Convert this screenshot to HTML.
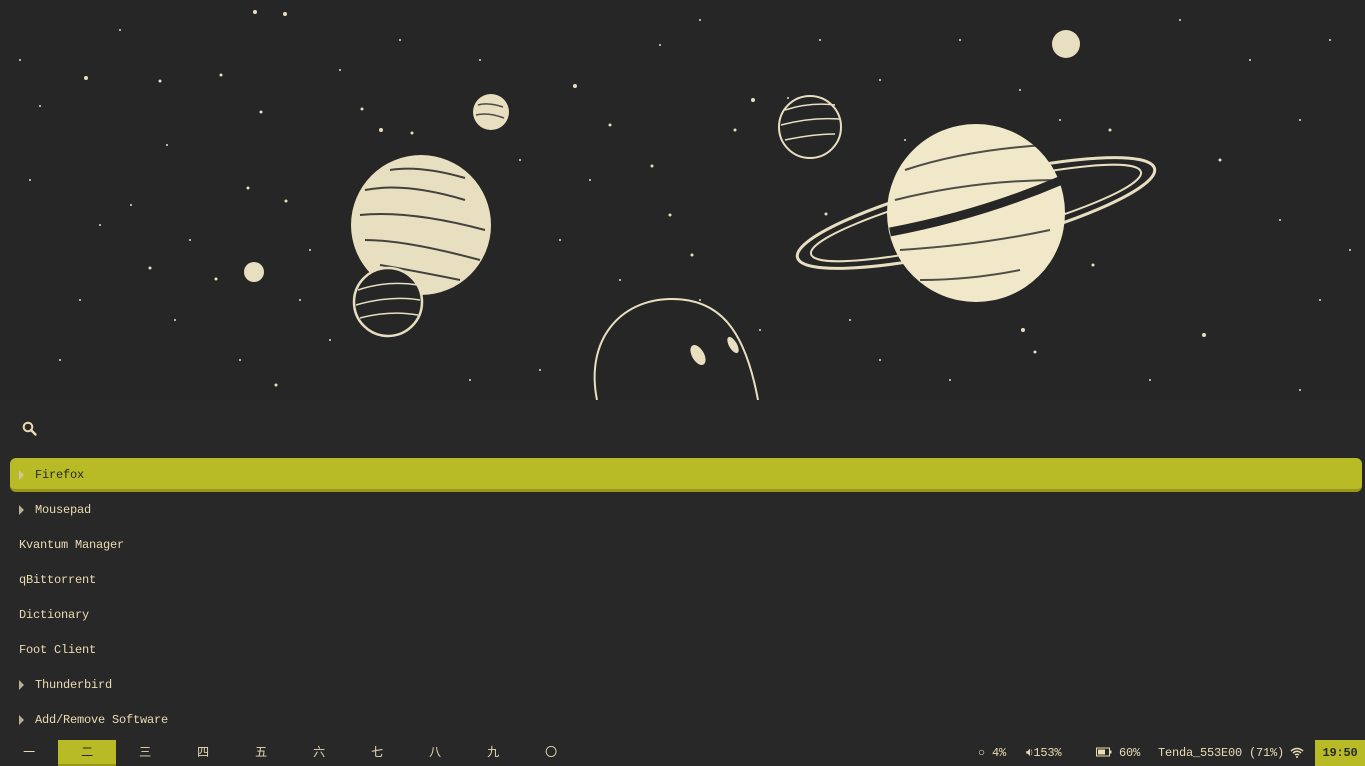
<!DOCTYPE html>
<html><head><meta charset="utf-8"><style>
html,body{margin:0;padding:0;width:1365px;height:766px;background:#282828;overflow:hidden;font-family:"Liberation Mono","Noto Sans CJK SC",monospace;color:#ebdbb2;font-size:12px}
svg.wp{position:absolute;left:0;top:0}
.row{position:absolute;left:10px;width:1352px;height:34px;line-height:35px;box-sizing:border-box;letter-spacing:-0.2px}
.row.sel{background:#b8bb26;border-radius:6px;border-bottom:3px solid #98971a;color:#282828;line-height:35px}
.tri{position:absolute;left:9px;top:12px;width:0;height:0;border-top:5px solid transparent;border-bottom:5px solid transparent;border-left:5px solid #bdae93}
.sel .tri{border-left-color:#d5c4a1}
.t1{position:absolute;left:25px}
.t0{position:absolute;left:9px}
.bar{position:absolute;left:0;top:740px;width:1365px;height:26px;line-height:26px;letter-spacing:-0.2px}
.ws{position:absolute;top:0;width:58px;text-align:center;font-size:12px}
.ws.a{background:#b8bb26;color:#282828;border-bottom:2px solid #98971a;height:24px}
.st{position:absolute;top:0}
</style></head><body>
<svg class="wp" width="1365" height="400" viewBox="0 0 1365 400">
<rect width="1365" height="400" fill="#262626"/>
<g fill="#e8dfc0">
<circle cx="255" cy="12" r="2"/><circle cx="285" cy="14" r="2"/><circle cx="86" cy="78" r="2"/><circle cx="160" cy="81" r="1.5"/><circle cx="221" cy="75" r="1.5"/><circle cx="575" cy="86" r="2"/><circle cx="362" cy="109" r="1.5"/><circle cx="381" cy="130" r="2"/><circle cx="412" cy="133" r="1.5"/><circle cx="261" cy="112" r="1.5"/><circle cx="248" cy="188" r="1.5"/><circle cx="286" cy="201" r="1.5"/><circle cx="167" cy="145" r="1"/><circle cx="40" cy="106" r="1"/><circle cx="20" cy="60" r="1"/><circle cx="131" cy="205" r="1"/><circle cx="100" cy="225" r="1"/><circle cx="190" cy="240" r="1"/><circle cx="216" cy="279" r="1.5"/><circle cx="150" cy="268" r="1.5"/><circle cx="80" cy="300" r="1"/><circle cx="175" cy="320" r="1"/><circle cx="240" cy="360" r="1"/><circle cx="276" cy="385" r="1.5"/><circle cx="60" cy="360" r="1"/><circle cx="330" cy="340" r="1"/><circle cx="540" cy="370" r="1"/><circle cx="470" cy="380" r="1"/><circle cx="610" cy="125" r="1.5"/><circle cx="652" cy="166" r="1.5"/><circle cx="670" cy="215" r="1.5"/><circle cx="692" cy="255" r="1.5"/><circle cx="735" cy="130" r="1.5"/><circle cx="753" cy="100" r="2"/><circle cx="788" cy="98" r="1"/><circle cx="826" cy="214" r="1.5"/><circle cx="660" cy="45" r="1"/><circle cx="700" cy="20" r="1"/><circle cx="820" cy="40" r="1"/><circle cx="880" cy="80" r="1"/><circle cx="905" cy="140" r="1"/><circle cx="850" cy="320" r="1"/><circle cx="1023" cy="330" r="2"/><circle cx="1035" cy="352" r="1.5"/><circle cx="1093" cy="265" r="1.5"/><circle cx="1204" cy="335" r="2"/><circle cx="1110" cy="130" r="1.5"/><circle cx="1220" cy="160" r="1.5"/><circle cx="1300" cy="120" r="1"/><circle cx="1330" cy="40" r="1"/><circle cx="1250" cy="60" r="1"/><circle cx="1180" cy="20" r="1"/><circle cx="960" cy="40" r="1"/><circle cx="1020" cy="90" r="1"/><circle cx="1280" cy="220" r="1"/><circle cx="1320" cy="300" r="1"/><circle cx="1150" cy="380" r="1"/><circle cx="1300" cy="390" r="1"/><circle cx="950" cy="380" r="1"/><circle cx="880" cy="360" r="1"/><circle cx="620" cy="280" r="1"/><circle cx="560" cy="240" r="1"/><circle cx="590" cy="180" r="1"/><circle cx="700" cy="300" r="1"/><circle cx="760" cy="330" r="1"/><circle cx="520" cy="160" r="1"/><circle cx="480" cy="60" r="1"/><circle cx="400" cy="40" r="1"/><circle cx="340" cy="70" r="1"/><circle cx="310" cy="250" r="1"/><circle cx="300" cy="300" r="1"/><circle cx="120" cy="30" r="1"/><circle cx="30" cy="180" r="1"/><circle cx="1060" cy="120" r="1"/><circle cx="1350" cy="250" r="1"/>
<circle cx="1066" cy="44" r="14"/><circle cx="254" cy="272" r="10"/>
<circle cx="491" cy="112" r="18"/>
<circle cx="421" cy="225" r="70"/>
</g>
<g stroke="#262626" stroke-width="1.5" fill="none" opacity=".8"><path d="M478 105 q10 -3 25 2 M476 115 q12 -3 28 3"/></g>
<g stroke="#262626" stroke-width="2" fill="none" opacity=".85">
<path d="M365 190 q40 -8 100 10 M360 215 q50 -5 125 15 M365 240 q40 0 115 20 M380 265 q30 5 80 15 M390 170 q30 -5 75 8"/>
</g>
<circle cx="388" cy="302" r="34" fill="#262626" stroke="#e8dfc0" stroke-width="2.5"/>
<g stroke="#e8dfc0" stroke-width="1.5" fill="none"><path d="M358 290 q30 -10 60 -5 M356 305 q35 -10 64 -5 M360 318 q30 -8 58 -3"/></g>
<circle cx="810" cy="127" r="31" fill="#262626" stroke="#e8dfc0" stroke-width="2"/>
<g stroke="#e8dfc0" stroke-width="1.5" fill="none"><path d="M785 110 q25 -8 50 -5 M781 125 q30 -8 58 -6 M785 140 q28 -6 50 -6"/></g>
<g transform="rotate(-14 976 213)">
<ellipse cx="976" cy="213" rx="184" ry="34" fill="none" stroke="#e8dfc0" stroke-width="3"/>
<ellipse cx="976" cy="213" rx="170" ry="26" fill="none" stroke="#e8dfc0" stroke-width="2"/>
</g>
<circle cx="976" cy="213" r="89" fill="#f0e8c8"/>
<g stroke="#262626" stroke-width="2" fill="none" opacity=".8"><path d="M905 170 q60 -20 140 -25 M895 200 q80 -20 165 -20 M900 250 q80 -5 150 -20 M920 280 q50 0 100 -10"/></g>
<path d="M890 232 Q980 215 1062 180" stroke="#262626" stroke-width="9" fill="none"/>
<path d="M597 400 C585 340 620 300 670 299 C720 298 745 330 758 400" fill="none" stroke="#e8dfc0" stroke-width="2"/>
<ellipse cx="698" cy="355" rx="6" ry="11" transform="rotate(-30 698 355)" fill="#e8dfc0"/>
<ellipse cx="733" cy="345" rx="4" ry="9" transform="rotate(-30 733 345)" fill="#e8dfc0"/>
</svg>
<svg style="position:absolute;left:22px;top:421px" width="16" height="16" viewBox="0 0 16 16"><circle cx="6" cy="6" r="4.3" fill="none" stroke="#ebdbb2" stroke-width="2"/><path d="M9 9 L13.5 13.5" stroke="#ebdbb2" stroke-width="2.4" stroke-linecap="round"/></svg>
<div class="row sel" style="top:458px"><span class="tri"></span><span class="t1">Firefox</span></div>
<div class="row" style="top:493px"><span class="tri"></span><span class="t1">Mousepad</span></div>
<div class="row" style="top:528px"><span class="t0">Kvantum Manager</span></div>
<div class="row" style="top:563px"><span class="t0">qBittorrent</span></div>
<div class="row" style="top:598px"><span class="t0">Dictionary</span></div>
<div class="row" style="top:633px"><span class="t0">Foot Client</span></div>
<div class="row" style="top:668px"><span class="tri"></span><span class="t1">Thunderbird</span></div>
<div class="row" style="top:703px"><span class="tri"></span><span class="t1">Add/Remove Software</span></div>
<div class="bar">
<div class="ws" style="left:0">一</div><div class="ws a" style="left:58px">二</div><div class="ws" style="left:116px">三</div><div class="ws" style="left:174px">四</div><div class="ws" style="left:232px">五</div><div class="ws" style="left:290px">六</div><div class="ws" style="left:348px">七</div><div class="ws" style="left:406px">八</div><div class="ws" style="left:464px">九</div><div class="ws" style="left:522px">〇</div>
<span class="st" style="left:978px">○ 4%</span>
<span class="st" style="left:1026px">🔉︎153%</span>
<span class="st" style="left:1096px"><svg width="16" height="10" viewBox="0 0 16 10" style="vertical-align:-1px"><rect x="0.5" y="1" width="13" height="8" fill="none" stroke="#ebdbb2"/><rect x="2" y="2.5" width="7" height="5" fill="#ebdbb2"/><rect x="14" y="3.5" width="1.5" height="3" fill="#ebdbb2"/></svg> 60%</span>
<span class="st" style="left:1158px">Tenda_553E00 (71%)</span>
<svg style="position:absolute;left:1290px;top:7px" width="14" height="11" viewBox="0 0 14 11"><path d="M1 4 Q7 -1 13 4 M3 6 Q7 2.5 11 6 M5 8 Q7 6.5 9 8" stroke="#ebdbb2" stroke-width="1.5" fill="none"/><circle cx="7" cy="10" r="1" fill="#ebdbb2"/></svg>
<div class="st" style="left:1315px;width:50px;height:26px;background:#b8bb26;color:#282828;text-align:center;font-weight:bold">19:50</div>
</div>
</body></html>
